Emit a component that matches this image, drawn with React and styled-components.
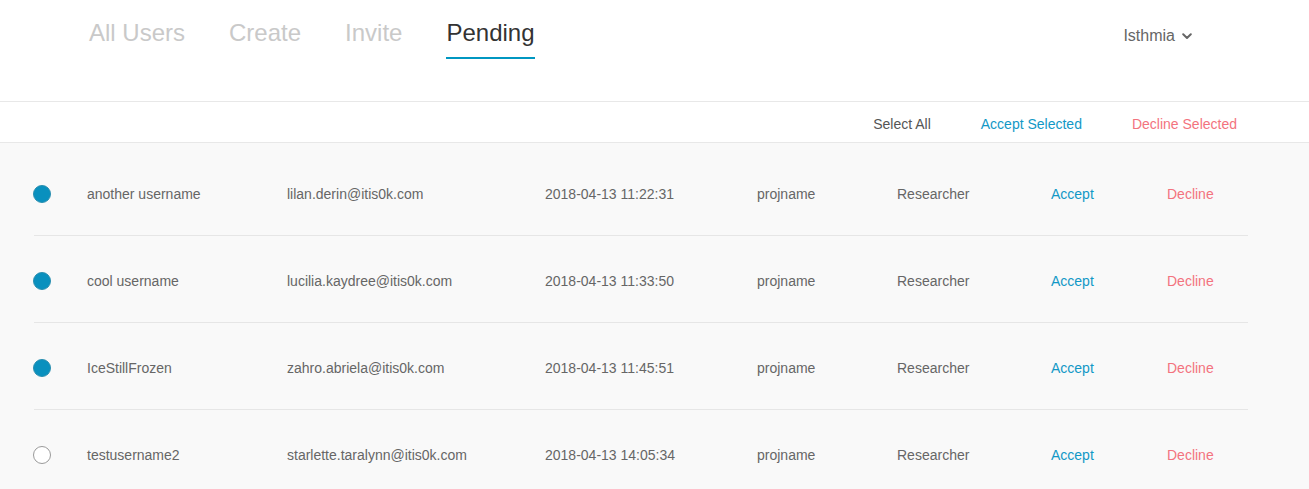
import React from "react";
import styled, { createGlobalStyle } from "styled-components";

const GlobalStyle = createGlobalStyle`
  html, body { margin: 0; padding: 0; background: #f9f9f9; }
  body { font-family: "Liberation Sans", Arial, sans-serif; }
  * { box-sizing: border-box; }
`;

const Page = styled.div`
  width: 1309px;
  min-height: 489px;
  background: #f9f9f9;
`;

const Header = styled.header`
  height: 102px;
  background: #fff;
  border-bottom: 1px solid #e8e8e8;
  display: flex;
  justify-content: space-between;
  align-items: flex-start;
  padding: 0 117px 0 89px;
`;

const Tabs = styled.nav`
  display: flex;
  gap: 44px;
`;

const Tab = styled.a`
  display: block;
  padding-top: 19px;
  padding-bottom: 10px;
  font-size: 24px;
  line-height: 28px;
  color: ${(p) => (p.$active ? "#333" : "#c9c9c9")};
  border-bottom: 2px solid ${(p) => (p.$active ? "#0097c1" : "transparent")};
  cursor: pointer;
`;

const ProjectPicker = styled.div`
  display: flex;
  align-items: center;
  gap: 7px;
  margin-top: 25px;
  font-size: 16px;
  line-height: 22px;
  color: #666;
`;

const Toolbar = styled.div`
  height: 41px;
  background: #fff;
  border-bottom: 1px solid #e8e8e8;
  display: flex;
  justify-content: flex-end;
  gap: 50px;
  padding: 12px 72px 0 0;
  font-size: 14px;
  line-height: 20px;
`;

const ToolAction = styled.a`
  color: ${(p) => p.$color};
  cursor: pointer;
`;

const List = styled.div`
  padding: 6px 61px 0 34px;
`;

const Row = styled.div`
  display: grid;
  grid-template-columns: 53px 200px 258px 212px 140px 154px 116px 1fr;
  align-items: center;
  padding: 35px 0 31px;
  border-bottom: ${(p) => (p.$last ? "none" : "1px solid #e6e6e6")};
  font-size: 14px;
  line-height: 20px;
  color: #666;
`;

const Radio = styled.span`
  display: block;
  width: 18px;
  height: 18px;
  margin-left: -1px;
  border-radius: 50%;
  background: ${(p) => (p.$checked ? "#0990be" : "#fff")};
  border: 1px solid ${(p) => (p.$checked ? "#2a8fb0" : "#9a9a9a")};
`;

const Cell = styled.span`
  white-space: nowrap;
`;

const RowAction = styled.a`
  color: ${(p) => p.$color};
  cursor: pointer;
`;

const ACCENT = "#1298c6";
const DANGER = "#f3737e";

const users = [
  { name: "another username", email: "lilan.derin@itis0k.com", date: "2018-04-13 11:22:31", checked: true },
  { name: "cool username", email: "lucilia.kaydree@itis0k.com", date: "2018-04-13 11:33:50", checked: true },
  { name: "IceStillFrozen", email: "zahro.abriela@itis0k.com", date: "2018-04-13 11:45:51", checked: true },
  { name: "testusername2", email: "starlette.taralynn@itis0k.com", date: "2018-04-13 14:05:34", checked: false },
];

const Chevron = () => (
  <svg width="10" height="7" viewBox="0 0 10 7" fill="none">
    <path d="M1.2 1.3 L5 5 L8.8 1.3" stroke="#666" strokeWidth="2" strokeLinecap="round" strokeLinejoin="round" />
  </svg>
);

export default function App() {
  return (
    <Page>
      <GlobalStyle />
      <Header>
        <Tabs>
          <Tab>All Users</Tab>
          <Tab>Create</Tab>
          <Tab>Invite</Tab>
          <Tab $active>Pending</Tab>
        </Tabs>
        <ProjectPicker>
          Isthmia <Chevron />
        </ProjectPicker>
      </Header>
      <Toolbar>
        <ToolAction $color="#555">Select All</ToolAction>
        <ToolAction $color={ACCENT}>Accept Selected</ToolAction>
        <ToolAction $color={DANGER}>Decline Selected</ToolAction>
      </Toolbar>
      <List>
        {users.map((u, i) => (
          <Row key={u.name} $last={i === users.length - 1}>
            <Radio $checked={u.checked} />
            <Cell>{u.name}</Cell>
            <Cell>{u.email}</Cell>
            <Cell>{u.date}</Cell>
            <Cell>projname</Cell>
            <Cell>Researcher</Cell>
            <RowAction $color={ACCENT}>Accept</RowAction>
            <RowAction $color={DANGER}>Decline</RowAction>
          </Row>
        ))}
      </List>
    </Page>
  );
}
